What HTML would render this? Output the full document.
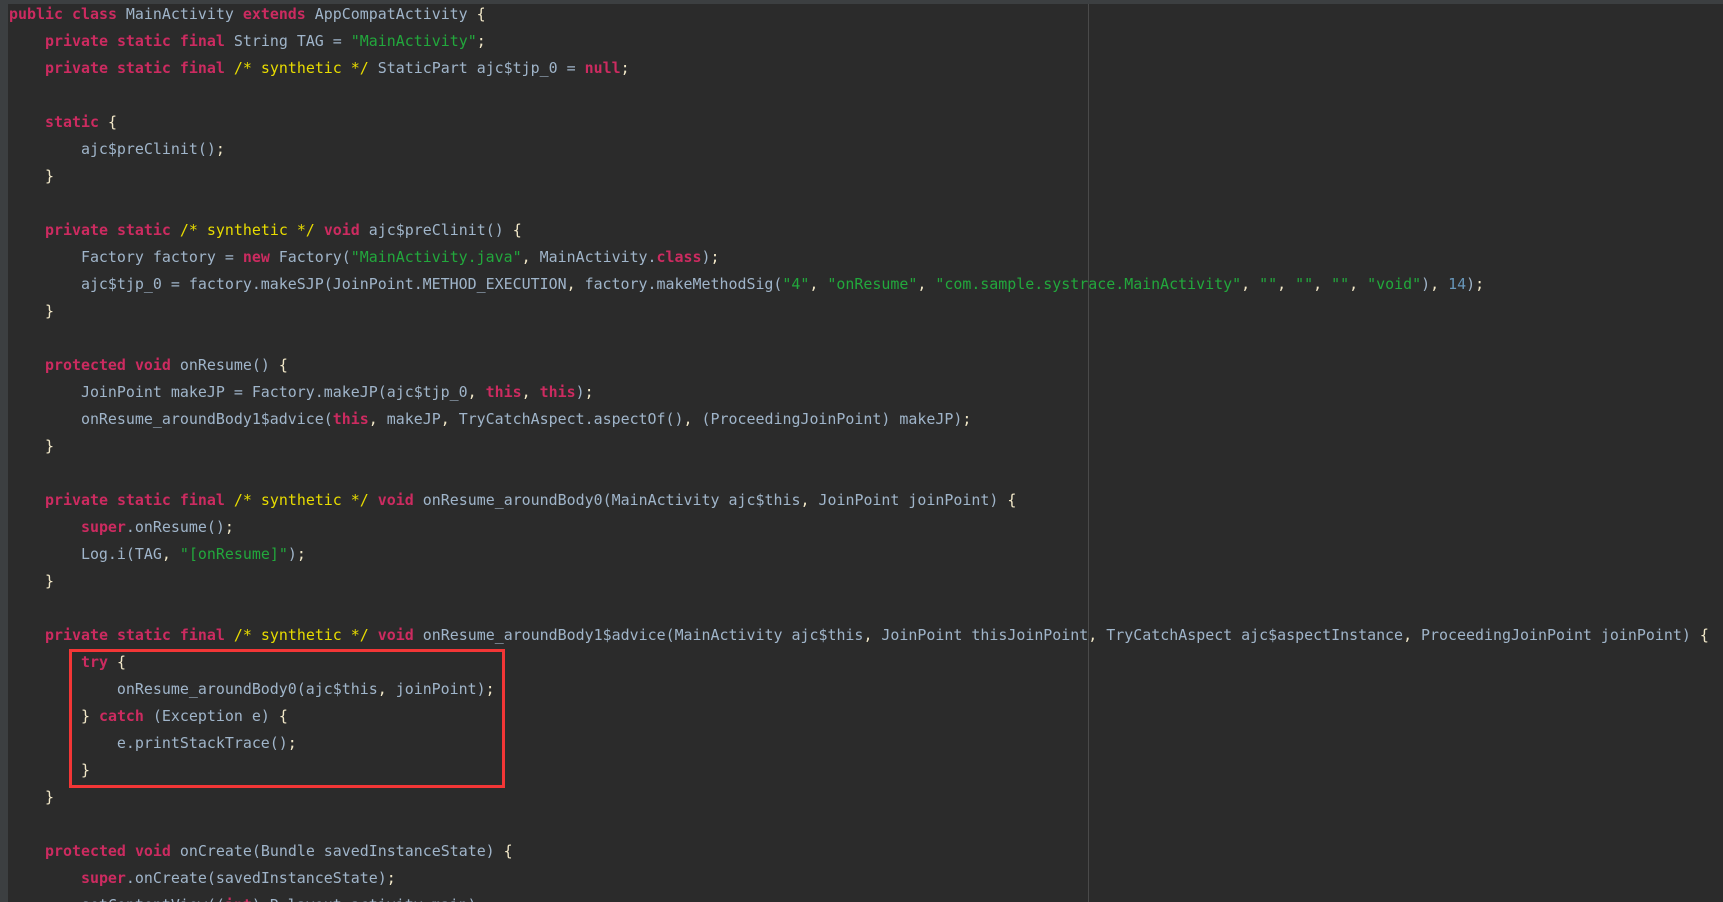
<!DOCTYPE html>
<html><head><meta charset="utf-8">
<style>
html,body{margin:0;padding:0;width:1723px;height:902px;overflow:hidden;background:#2b2b2b}
#w{position:relative;width:1723px;height:902px;overflow:hidden;background:#2b2b2b}
#g{position:absolute;left:0;top:0;width:8px;height:902px;background:#3c3f41}
#t{position:absolute;left:0;top:0;width:1723px;height:4px;background:#3c3f41}
#v{position:absolute;left:1088px;top:4px;width:1px;height:898px;background:#4a4a4a}
#b{position:absolute;left:69px;top:649px;width:430px;height:133px;border:3px solid #f33636}
pre{position:absolute;left:9px;top:1px;margin:0;font:14.95px/27px "DejaVu Sans Mono","Liberation Mono",monospace;color:#a0b5ca;white-space:pre}
b{color:#cc2b60;font-weight:bold}
i{color:#e8dc00;font-style:normal}
s{color:#22a83c;text-decoration:none}
u{color:#6897bb;text-decoration:none}
em{color:#f2e8c8;font-style:normal}
</style></head><body>
<div id="w">
<div id="g"></div><div id="t"></div><div id="v"></div>
<pre><b>public</b> <b>class</b> MainActivity <b>extends</b> AppCompatActivity <em>{</em>
    <b>private</b> <b>static</b> <b>final</b> String TAG = <s>"MainActivity"</s><em>;</em>
    <b>private</b> <b>static</b> <b>final</b> <i>/* synthetic */</i> StaticPart ajc$tjp_0 = <b>null</b><em>;</em>

    <b>static</b> <em>{</em>
        ajc$preClinit()<em>;</em>
    <em>}</em>

    <b>private</b> <b>static</b> <i>/* synthetic */</i> <b>void</b> ajc$preClinit() <em>{</em>
        Factory factory = <b>new</b> Factory(<s>"MainActivity.java"</s><em>,</em> MainActivity.<b>class</b>)<em>;</em>
        ajc$tjp_0 = factory.makeSJP(JoinPoint.METHOD_EXECUTION<em>,</em> factory.makeMethodSig(<s>"4"</s><em>,</em> <s>"onResume"</s><em>,</em> <s>"com.sample.systrace.MainActivity"</s><em>,</em> <s>""</s><em>,</em> <s>""</s><em>,</em> <s>""</s><em>,</em> <s>"void"</s>)<em>,</em> <u>14</u>)<em>;</em>
    <em>}</em>

    <b>protected</b> <b>void</b> onResume() <em>{</em>
        JoinPoint makeJP = Factory.makeJP(ajc$tjp_0<em>,</em> <b>this</b><em>,</em> <b>this</b>)<em>;</em>
        onResume_aroundBody1$advice(<b>this</b><em>,</em> makeJP<em>,</em> TryCatchAspect.aspectOf()<em>,</em> (ProceedingJoinPoint) makeJP)<em>;</em>
    <em>}</em>

    <b>private</b> <b>static</b> <b>final</b> <i>/* synthetic */</i> <b>void</b> onResume_aroundBody0(MainActivity ajc$this<em>,</em> JoinPoint joinPoint) <em>{</em>
        <b>super</b>.onResume()<em>;</em>
        Log.i(TAG<em>,</em> <s>"[onResume]"</s>)<em>;</em>
    <em>}</em>

    <b>private</b> <b>static</b> <b>final</b> <i>/* synthetic */</i> <b>void</b> onResume_aroundBody1$advice(MainActivity ajc$this<em>,</em> JoinPoint thisJoinPoint<em>,</em> TryCatchAspect ajc$aspectInstance<em>,</em> ProceedingJoinPoint joinPoint) <em>{</em>
        <b>try</b> <em>{</em>
            onResume_aroundBody0(ajc$this<em>,</em> joinPoint)<em>;</em>
        <em>}</em> <b>catch</b> (Exception e) <em>{</em>
            e.printStackTrace()<em>;</em>
        <em>}</em>
    <em>}</em>

    <b>protected</b> <b>void</b> onCreate(Bundle savedInstanceState) <em>{</em>
        <b>super</b>.onCreate(savedInstanceState)<em>;</em>
        setContentView((<b>int</b>) R.layout.activity_main)<em>;</em></pre>
<div id="b"></div>
</div>
</body></html>
